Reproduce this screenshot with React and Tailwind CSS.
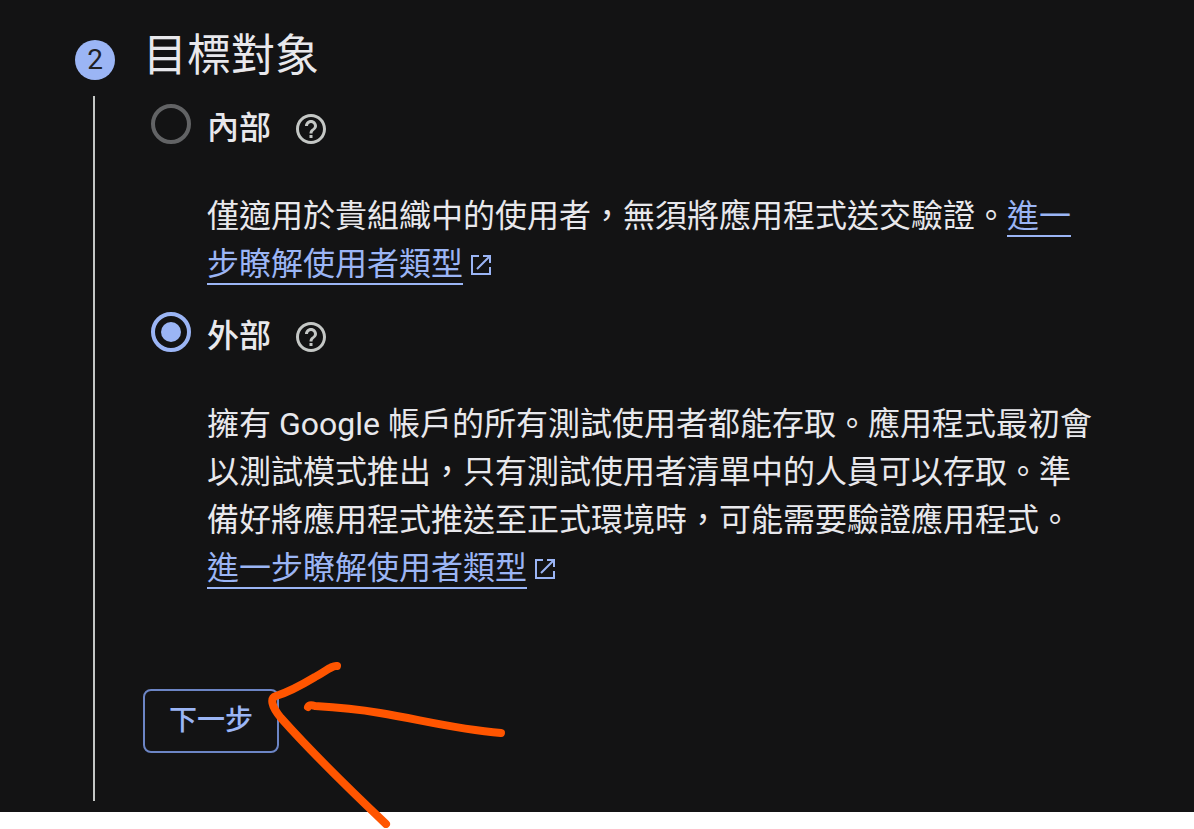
import clsx from 'clsx'

function HelpIcon() {
  return (
    <svg viewBox="0 0 24 24" className="size-9" fill="currentColor" aria-hidden="true">
      <path d="M11 18h2v-2h-2v2zm1-16C6.48 2 2 6.48 2 12s4.48 10 10 10 10-4.48 10-10S17.52 2 12 2zm0 18c-4.41 0-8-3.59-8-8s3.59-8 8-8 8 3.59 8 8-3.59 8-8 8zm0-14c-2.21 0-4 1.79-4 4h2c0-1.1.9-2 2-2s2 .9 2 2c0 2-3 1.75-3 5h2c0-2.25 3-2.5 3-5 0-2.21-1.79-4-4-4z" />
    </svg>
  )
}

function ExternalLink({ children }) {
  return (
    <a href="#user-type" className="text-[#9bb5f5]">
      <span className="border-b-2 border-[#9bb5f5]">{children}</span>
      <svg
        viewBox="0 0 20 20"
        className="ml-2 inline-block size-5 align-baseline"
        fill="none"
        stroke="currentColor"
        strokeWidth="2"
        aria-hidden="true"
      >
        <path d="M8 1H1V19H19V12M12 1H19V8M19 1L6 14" />
      </svg>
    </a>
  )
}

function Option({ id, label, defaultChecked, className, children }) {
  return (
    <div className={clsx('pl-2', className)}>
      <div className="flex items-start">
        <input
          type="radio"
          name="audience"
          id={id}
          defaultChecked={defaultChecked}
          className="size-10 shrink-0 appearance-none rounded-full border-4 border-[#626365] bg-clip-content p-1.5 checked:border-[#9bb5f5] checked:bg-[#9bb5f5]"
        />
        <label htmlFor={id} className="ml-4 text-[32px] leading-[48px] font-medium">
          {label}
        </label>
        <button type="button" aria-label="說明" className="mt-[7px] ml-[22px] text-[#c4c7c5]">
          <HelpIcon />
        </button>
      </div>
      <p className="mt-10 pl-14 text-[32px] leading-[48px]">{children}</p>
    </div>
  )
}

// Hand-drawn arrow pointing at the button
function Arrow() {
  return (
    <svg
      viewBox="0 0 250 172"
      className="pointer-events-none absolute top-[656px] left-[264px] h-[172px] w-[250px]"
      fill="none"
      stroke="#ff5500"
      strokeWidth="8"
      strokeLinecap="round"
      strokeLinejoin="round"
      aria-hidden="true"
    >
      <path d="M73 10C68 9 61 16 51 21C36 30 25 36 12 40C6 42 7 50 17 62C49 98 83 131 122 168" />
      <path d="M44 51C45 49 48 49 51 50C70 51 93 53 116 57C154 63 190 73 237 77" />
    </svg>
  )
}

export default function App() {
  return (
    <div className="min-h-screen bg-white font-[Roboto,'Noto_Sans_CJK_TC',sans-serif]">
      <main className="relative flex gap-7 bg-[#131314] pr-24 pb-[11px] pl-[75px] text-[#e8e8ec]">
        <div className="flex w-10 shrink-0 flex-col items-center pt-10">
          <div className="flex size-10 items-center justify-center rounded-full bg-[#9bb5f5] text-[28px] text-[#202124]">
            2
          </div>
          <div className="mt-4 mr-0.5 w-0.5 flex-1 bg-[#c4c7c5]" />
        </div>

        <form className="min-w-0 flex-1 pt-8 pb-12">
          <h2 className="text-[44px] leading-[48px]">目標對象</h2>

          <Option id="internal" label="內部" className="mt-6">
            僅適用於貴組織中的使用者，無須將應用程式送交驗證。<ExternalLink>進一步瞭解使用者類型</ExternalLink>
          </Option>

          <Option id="external" label="外部" className="mt-6" defaultChecked>
            擁有 Google 帳戶的所有測試使用者都能存取。應用程式最初會以測試模式推出，只有測試使用者清單中的人員可以存取。準備好將應用程式推送至正式環境時，可能需要驗證應用程式。
            <ExternalLink>進一步瞭解使用者類型</ExternalLink>
          </Option>

          <button
            type="button"
            className="mt-[97px] h-16 rounded-lg border-2 border-[#6c85c5] px-6 text-[28px] font-medium text-[#9bb5f5]"
          >
            下一步
          </button>
        </form>

        <Arrow />
      </main>
    </div>
  )
}
